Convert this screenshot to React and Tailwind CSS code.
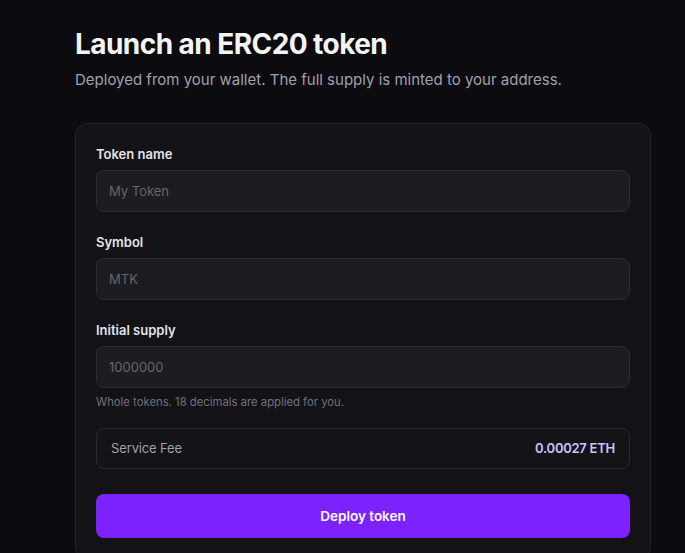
export default function App() {
  const font = { fontFamily: 'Inter, "Noto Sans", sans-serif' };
  return (
    <div className="min-h-[553px] bg-[#0b0b10] text-white" style={font}>
      <div className="pl-[75px] pt-[26px] w-[651px]">
        <h1 className="text-[28px] leading-[36px] font-bold tracking-[-0.02em] text-[#f4f4f5]">Launch an ERC20 token</h1>
        <p className="mt-[6px] text-[15px] leading-6 text-[#a1a1aa]">Deployed from your wallet. The full supply is minted to your address.</p>

        <div className="mt-[31px] rounded-xl border border-[#232329] bg-[#121217] p-5">
          <Field label="Token name" placeholder="My Token" />
          <Field label="Symbol" placeholder="MTK" className="mt-5" />
          <Field label="Initial supply" placeholder="1000000" className="mt-5" />
          <p className="mt-[6px] text-[11.3px] leading-4 text-[#71717a]">Whole tokens. 18 decimals are applied for you.</p>

          <div className="mt-[18px] flex h-[41px] items-center justify-between rounded-lg border border-[#2a2a31] bg-[#131318] px-[14px] text-[13px]">
            <span className="text-[#a1a1aa] tracking-[-0.01em]">Service Fee</span>
            <span className="font-semibold text-[#c9c4fb] tracking-[-0.02em]">0.00027 ETH</span>
          </div>

          <button className="mt-[25px] flex h-[44px] w-full items-center justify-center rounded-lg bg-[#7b22fe] text-[13.5px] font-semibold text-white">
            Deploy token
          </button>
        </div>
      </div>
    </div>
  );
}

function Field({ label, placeholder, className = "" }) {
  return (
    <div className={className}>
      <label className="block text-[13px] leading-5 font-semibold text-[#e4e4e7]">{label}</label>
      <input
        placeholder={placeholder}
        className="mt-[6px] block h-[42px] w-full rounded-lg border border-[#2c2c33] bg-[#1c1c21] px-3 text-[13px] text-white outline-none placeholder:text-[#66666e]"
        style={{ fontFamily: 'Inter, "Noto Sans", sans-serif' }}
      />
    </div>
  );
}
